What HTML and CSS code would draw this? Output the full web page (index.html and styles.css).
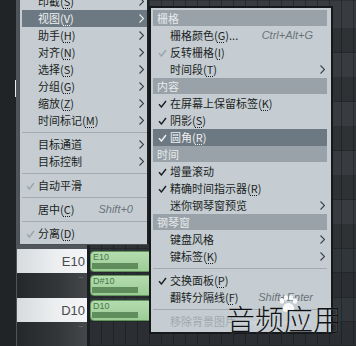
FILE: index.html
```html
<!DOCTYPE html>
<html lang="zh-CN">
<head>
  <meta charset="UTF-8" />
  <meta name="viewport" content="width=device-width, initial-scale=1.0" />
  <title>钢琴窗 - 视图菜单</title>
  <link rel="stylesheet" href="styles.css">
</head>
<body>
  <div class="screen">
    <div class="side"><span class="side-thumb"></span></div>

    <div class="roll">
      <div class="roll-row row-top">
        <div class="key key-top"></div>
        <div class="lane lane-top"></div>
      </div>
      <div class="roll-row row-e">
        <div class="key key-white">E10</div>
        <div class="lane">
          <div class="note"><span class="note-name">E10</span><span class="note-vel"></span></div>
        </div>
      </div>
      <div class="roll-row row-ds">
        <div class="key key-black"><span class="key-tick"></span></div>
        <div class="lane lane-dark">
          <div class="note"><span class="note-name">D#10</span><span class="note-vel"></span></div>
        </div>
      </div>
      <div class="roll-row row-d">
        <div class="key key-white">D10</div>
        <div class="lane">
          <div class="note"><span class="note-name">D10</span><span class="note-vel"></span></div>
        </div>
      </div>
      <div class="roll-row row-cs">
        <div class="key key-black"><span class="key-tick"></span></div>
        <div class="lane lane-dark"></div>
      </div>
    </div>

    <!-- main context menu -->
    <div class="menu menu-main">
      <div class="mi"><span class="mi-check"></span><span class="mi-label">印截(<u>S</u>)</span><span class="mi-key"></span><span class="mi-arrow"><svg viewBox="0 0 5 9" width="5" height="9"><polyline points="0.5,0.5 4.5,4.5 0.5,8.5"/></svg></span></div>
      <div class="mi mi-hot"><span class="mi-check"></span><span class="mi-label">视图(<u>V</u>)</span><span class="mi-key"></span><span class="mi-arrow"><svg viewBox="0 0 5 9" width="5" height="9"><polyline points="0.5,0.5 4.5,4.5 0.5,8.5"/></svg></span></div>
      <div class="mi"><span class="mi-check"></span><span class="mi-label">助手(<u>H</u>)</span><span class="mi-key"></span><span class="mi-arrow"><svg viewBox="0 0 5 9" width="5" height="9"><polyline points="0.5,0.5 4.5,4.5 0.5,8.5"/></svg></span></div>
      <div class="mi"><span class="mi-check"></span><span class="mi-label">对齐(<u>N</u>)</span><span class="mi-key"></span><span class="mi-arrow"><svg viewBox="0 0 5 9" width="5" height="9"><polyline points="0.5,0.5 4.5,4.5 0.5,8.5"/></svg></span></div>
      <div class="mi"><span class="mi-check"></span><span class="mi-label">选择(<u>S</u>)</span><span class="mi-key"></span><span class="mi-arrow"><svg viewBox="0 0 5 9" width="5" height="9"><polyline points="0.5,0.5 4.5,4.5 0.5,8.5"/></svg></span></div>
      <div class="mi"><span class="mi-check"></span><span class="mi-label">分组(<u>G</u>)</span><span class="mi-key"></span><span class="mi-arrow"><svg viewBox="0 0 5 9" width="5" height="9"><polyline points="0.5,0.5 4.5,4.5 0.5,8.5"/></svg></span></div>
      <div class="mi"><span class="mi-check"></span><span class="mi-label">缩放(<u>Z</u>)</span><span class="mi-key"></span><span class="mi-arrow"><svg viewBox="0 0 5 9" width="5" height="9"><polyline points="0.5,0.5 4.5,4.5 0.5,8.5"/></svg></span></div>
      <div class="mi"><span class="mi-check"></span><span class="mi-label">时间标记(<u>M</u>)</span><span class="mi-key"></span><span class="mi-arrow"><svg viewBox="0 0 5 9" width="5" height="9"><polyline points="0.5,0.5 4.5,4.5 0.5,8.5"/></svg></span></div>
      <div class="ms"></div>
      <div class="mi"><span class="mi-check"></span><span class="mi-label">目标通道</span><span class="mi-key"></span><span class="mi-arrow"><svg viewBox="0 0 5 9" width="5" height="9"><polyline points="0.5,0.5 4.5,4.5 0.5,8.5"/></svg></span></div>
      <div class="mi"><span class="mi-check"></span><span class="mi-label">目标控制</span><span class="mi-key"></span><span class="mi-arrow"><svg viewBox="0 0 5 9" width="5" height="9"><polyline points="0.5,0.5 4.5,4.5 0.5,8.5"/></svg></span></div>
      <div class="ms"></div>
      <div class="mi"><span class="mi-check dim"><svg viewBox="0 0 9 8" width="9" height="8"><polyline points="1,4.3 3.4,7 8,1"/></svg></span><span class="mi-label">自动平滑</span><span class="mi-key"></span><span class="mi-arrow"></span></div>
      <div class="ms"></div>
      <div class="mi"><span class="mi-check"></span><span class="mi-label">居中(<u>C</u>)</span><span class="mi-key">Shift+0</span><span class="mi-arrow"></span></div>
      <div class="ms"></div>
      <div class="mi"><span class="mi-check dim"><svg viewBox="0 0 9 8" width="9" height="8"><polyline points="1,4.3 3.4,7 8,1"/></svg></span><span class="mi-label">分离(<u>D</u>)</span><span class="mi-key"></span><span class="mi-arrow"></span></div>
    </div>

    <!-- view submenu -->
    <div class="menu menu-sub">
      <div class="mh">栅格</div>
      <div class="mi"><span class="mi-check"></span><span class="mi-label">栅格颜色(<u>G</u>)...</span><span class="mi-key">Ctrl+Alt+G</span><span class="mi-arrow"></span></div>
      <div class="mi"><span class="mi-check dim"><svg viewBox="0 0 9 8" width="9" height="8"><polyline points="1,4.3 3.4,7 8,1"/></svg></span><span class="mi-label">反转栅格(<u>I</u>)</span><span class="mi-key"></span><span class="mi-arrow"></span></div>
      <div class="mi"><span class="mi-check"></span><span class="mi-label">时间段(<u>T</u>)</span><span class="mi-key"></span><span class="mi-arrow"><svg viewBox="0 0 5 9" width="5" height="9"><polyline points="0.5,0.5 4.5,4.5 0.5,8.5"/></svg></span></div>
      <div class="mh">内容</div>
      <div class="mi"><span class="mi-check"><svg viewBox="0 0 9 8" width="9" height="8"><polyline points="1,4.3 3.4,7 8,1"/></svg></span><span class="mi-label">在屏幕上保留标签(<u>K</u>)</span><span class="mi-key"></span><span class="mi-arrow"></span></div>
      <div class="mi"><span class="mi-check"><svg viewBox="0 0 9 8" width="9" height="8"><polyline points="1,4.3 3.4,7 8,1"/></svg></span><span class="mi-label">阴影(<u>S</u>)</span><span class="mi-key"></span><span class="mi-arrow"></span></div>
      <div class="mi mi-hot"><span class="mi-check"><svg viewBox="0 0 9 8" width="9" height="8"><polyline points="1,4.3 3.4,7 8,1"/></svg></span><span class="mi-label">圆角(<u>R</u>)</span><span class="mi-key"></span><span class="mi-arrow"></span></div>
      <div class="mh">时间</div>
      <div class="mi"><span class="mi-check"><svg viewBox="0 0 9 8" width="9" height="8"><polyline points="1,4.3 3.4,7 8,1"/></svg></span><span class="mi-label">增量滚动</span><span class="mi-key"></span><span class="mi-arrow"></span></div>
      <div class="mi"><span class="mi-check"><svg viewBox="0 0 9 8" width="9" height="8"><polyline points="1,4.3 3.4,7 8,1"/></svg></span><span class="mi-label">精确时间指示器(<u>R</u>)</span><span class="mi-key"></span><span class="mi-arrow"></span></div>
      <div class="mi"><span class="mi-check"></span><span class="mi-label">迷你钢琴窗预览</span><span class="mi-key"></span><span class="mi-arrow"><svg viewBox="0 0 5 9" width="5" height="9"><polyline points="0.5,0.5 4.5,4.5 0.5,8.5"/></svg></span></div>
      <div class="mh">钢琴窗</div>
      <div class="mi"><span class="mi-check"></span><span class="mi-label">键盘风格</span><span class="mi-key"></span><span class="mi-arrow"><svg viewBox="0 0 5 9" width="5" height="9"><polyline points="0.5,0.5 4.5,4.5 0.5,8.5"/></svg></span></div>
      <div class="mi"><span class="mi-check"></span><span class="mi-label">键标签(<u>K</u>)</span><span class="mi-key"></span><span class="mi-arrow"><svg viewBox="0 0 5 9" width="5" height="9"><polyline points="0.5,0.5 4.5,4.5 0.5,8.5"/></svg></span></div>
      <div class="ms"></div>
      <div class="mi"><span class="mi-check"><svg viewBox="0 0 9 8" width="9" height="8"><polyline points="1,4.3 3.4,7 8,1"/></svg></span><span class="mi-label">交换面板(<u>P</u>)</span><span class="mi-key"></span><span class="mi-arrow"></span></div>
      <div class="mi"><span class="mi-check"></span><span class="mi-label">翻转分隔线(<u>F</u>)</span><span class="mi-key">Shift+Enter</span><span class="mi-arrow"></span></div>
      <div class="ms"></div>
      <div class="mi mi-off"><span class="mi-check"></span><span class="mi-label">移除背景图片</span><span class="mi-key"></span><span class="mi-arrow"></span></div>
    </div>

    <!-- watermark -->
    <div class="wm-paw">
      <svg viewBox="0 0 20 18" width="20" height="18">
        <ellipse cx="4" cy="6" rx="2.2" ry="2.8"/>
        <ellipse cx="8" cy="2.8" rx="2.2" ry="2.6"/>
        <ellipse cx="13" cy="2.8" rx="2.2" ry="2.6"/>
        <ellipse cx="17" cy="6" rx="2.2" ry="2.8"/>
        <path d="M10.5 8 C6 8 4 13 5 15.5 C6 17.5 9 16.5 10.5 16.5 C12 16.5 15 17.5 16 15.5 C17 13 15 8 10.5 8 Z"/>
      </svg>
    </div>
    <div class="wm-site">jingyan.baidu.com</div>
    <div class="wm-text">音频应用</div>
  </div>
</body>
</html>
```

FILE: styles.css
```css
body {
  margin: 0;
  background: #2c3033;
  font-family: "Noto Sans CJK SC", "Liberation Sans", sans-serif;
  font-size: 11px;
  color: #1b1f23;
}
.screen {
  position: relative;
  width: 356px;
  height: 346px;
  overflow: hidden;
  display: flex;
}
.side {
  width: 16px;
  background: #202427;
  border-right: 1px solid #4e555a;
  display: flex;
  flex-direction: column;
  align-items: flex-end;
}
.side-thumb {
  margin-top: 80px;
  width: 1px;
  height: 17px;
  background: #e8ecee;
}
.roll {
  flex: 1;
  display: flex;
  flex-direction: column;
}
.roll-row {
  display: flex;
}
.row-top { height: 249px; }
.row-e { height: 24px; }
.row-ds { height: 25px; }
.row-d { height: 24px; }
.row-cs { flex: 1; }

.key {
  width: 70px;
  border-right: 3px solid #1b1e21;
  font-family: "Liberation Sans", sans-serif;
  font-size: 13px;
  color: #464b50;
  display: flex;
  align-items: center;
  justify-content: flex-end;
}
.key-top {
  background: #50565b;
}
.key-white {
  background: linear-gradient(90deg, #d7dbde, #eceef0 55%, #f4f5f6);
  padding-right: 2px;
  width: 68px;
}
.key-black {
  background: linear-gradient(90deg, #25282b, #34373a 60%, #45484b);
  align-items: flex-start;
}
.key-tick {
  width: 4px;
  height: 1px;
  margin: 4px 4px 0 0;
  background: #5d6165;
}

.lane {
  flex: 1;
  background-color: #31363a;
  background-image: repeating-linear-gradient(90deg, transparent 0 11px, rgba(0,0,0,0.25) 11px 12px);
  border-bottom: 1px solid #24282b;
  box-sizing: border-box;
}
.lane-dark {
  background-color: #2b2f33;
}
.lane-top {
  background-color: #2b2f32;
  background-image:
    repeating-linear-gradient(90deg, transparent 0 11px, rgba(0,0,0,0.28) 11px 12px),
    repeating-linear-gradient(180deg, #383c40 0 24px, #25292c 24px 24.5px, #2e3235 24.5px 48.5px, #25292c 48.5px 49px);
  background-position: 0 0, 0 4px;
}

.note {
  width: 80px;
  height: 21px;
  margin-top: 2px;
  box-sizing: border-box;
  border: 1px solid #5f955b;
  border-radius: 4px;
  background: linear-gradient(180deg, #b4dcae, #9ccc96);
  display: flex;
  flex-direction: column;
  padding-left: 1px;
}
.note-name {
  font-family: "Liberation Sans", sans-serif;
  font-size: 9px;
  line-height: 10px;
  color: #47794a;
  padding-left: 1px;
}
.note-vel {
  width: 46px;
  height: 6px;
  margin-top: 1px;
  background: #5f8d5b;
}

/* menus */
.menu {
  position: absolute;
  background: #c5cdd2;
}
.menu-main {
  left: 18px;
  top: -7px;
  width: 125px;
  padding: 0 0 2px 2px;
  border-left: 2px solid #4b5156;
  border-right: 2px solid #1c2023;
  border-bottom: 1px solid #4b5156;
  --check-col: 16px;
  --arrow-col: 12px;
  --check-pad: 4px;
  --key-gap: 2px;
}
.menu-sub {
  left: 149px;
  top: 6px;
  width: 174px;
  padding: 2px 4px 2px 2px;
  border: 2px solid #16191c;
  --check-col: 17px;
  --arrow-col: 10px;
  --check-pad: 5px;
  --key-gap: 4px;
}
.mi {
  display: grid;
  grid-template-columns: var(--check-col) 1fr auto var(--arrow-col);
  align-items: center;
  height: 17px;
  line-height: 17px;
  white-space: nowrap;
}
.mi-check {
  display: flex;
  padding-left: var(--check-pad);
  color: #1b1f23;
}
.mi-check.dim {
  color: #9ba4aa;
}
.mi-check svg polyline {
  fill: none;
  stroke: currentColor;
  stroke-width: 1.4;
}
.mi-key {
  font-family: "Liberation Sans", sans-serif;
  font-style: italic;
  color: #6a7379;
  margin-right: var(--key-gap);
}
.mi-arrow {
  display: flex;
  justify-content: center;
}
.mi-arrow svg polyline {
  fill: none;
  stroke: #3b4247;
  stroke-width: 1.1;
}
.mi-hot {
  background: #6d7982;
  color: #eef1f3;
}
.mi-hot .mi-check {
  color: #f2f4f5;
}
.mi-hot .mi-arrow svg polyline {
  stroke: #e6eaec;
}
.mi-off {
  color: #a1a9ae;
}
.mi u {
  text-decoration: underline dotted;
  text-underline-offset: 2px;
}
.mh {
  height: 16px;
  line-height: 16px;
  margin-bottom: 1px;
  padding-left: 4px;
  background: #99a2a8;
  color: #e6eaec;
}
.ms {
  height: 7px;
  display: flex;
  align-items: center;
}
.ms::before {
  content: "";
  flex: 1;
  height: 1px;
  background: #a3abb0;
}

/* watermark overlay */
.wm-text {
  position: absolute;
  left: 226px;
  top: 300px;
  font-size: 29px;
  font-weight: 200;
  line-height: 36px;
  color: #0f1112;
  text-shadow: 0 0 1px rgba(255,255,255,0.45);
}
.wm-paw {
  position: absolute;
  left: 278px;
  top: 295px;
  display: flex;
}
.wm-paw svg {
  fill: rgba(255,255,255,0.9);
}
.wm-site {
  position: absolute;
  left: 246px;
  top: 318px;
  font-family: "Liberation Sans", sans-serif;
  font-size: 8px;
  color: rgba(255,255,255,0.35);
}
```
